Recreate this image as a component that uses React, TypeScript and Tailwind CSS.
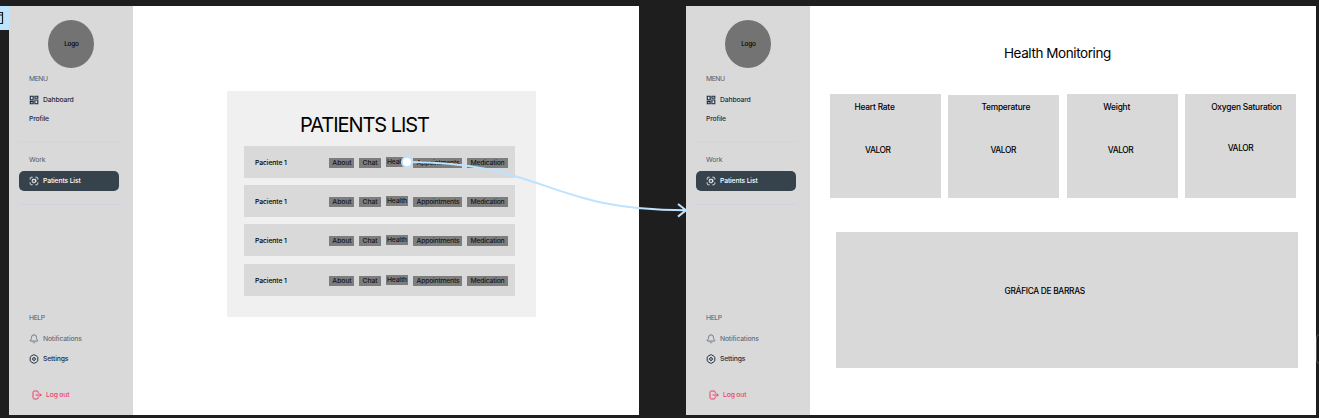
import React from "react";
import { Bell } from "lucide-react";

const actions = [
  { label: "About", box: "w-[25px]", text: "tracking-[-0.05px] pl-px" },
  { label: "Chat", box: "ml-[5px] w-[22px]", text: "tracking-[-0.05px]" },
  { label: "Health", box: "ml-[5px] w-[22px] -mt-px", text: "tracking-[-0.2px]" },
  { label: "Appointments", box: "ml-[5px] w-[49px]", text: "tracking-[-0.22px] pl-px" },
  { label: "Medication", box: "ml-[5px] w-[41px]", text: "tracking-[-0.22px]" },
];

const cards = [
  { title: "Heart Rate", box: "h-[104px]", titlePad: "pl-[24.5px]", valuePad: "pl-[35px] mt-[31px]" },
  { title: "Temperature", box: "mt-px h-[103px]", titlePad: "pl-[33px] -mt-px", valuePad: "pl-[42px] mt-[31px]" },
  { title: "Weight", box: "h-[104px]", titlePad: "pl-[36.5px]", valuePad: "pl-[41px] mt-[31px]" },
  { title: "Oxygen Saturation", box: "h-[104px]", titlePad: "pl-[26px]", valuePad: "pl-[42.5px] mt-[29px]" },
];

function DashboardIcon() {
  return (
    <svg viewBox="0 0 10 10" className="size-[10px]" fill="none" stroke="currentColor" strokeWidth="1.1">
      <path d="M1.3 1.3h2.9v3.6H1.3zM5.9 1.3h2.9v2H5.9zM5.9 5h2.9v3.8H5.9zM1.3 6.6h2.9v2.2H1.3z" />
    </svg>
  );
}

function ScanIcon() {
  return (
    <svg viewBox="0 0 10 10" className="size-[10px]" fill="none" stroke="currentColor" strokeWidth="0.9" strokeLinecap="round">
      <path d="M1.2 3.2V2.5c0-.8.5-1.3 1.3-1.3h.7M6.8 1.2h.7c.8 0 1.3.5 1.3 1.3v.7M8.8 6.8v.7c0 .8-.5 1.3-1.3 1.3h-.7M3.2 8.8h-.7c-.8 0-1.3-.5-1.3-1.3v-.7" />
      <circle cx="5" cy="5" r="1.9" />
      <path d="M3.3 3l.7.7M6.7 3l-.7.7M5 5v.1" />
    </svg>
  );
}

function SettingsIcon() {
  return (
    <svg viewBox="0 0 10 10" className="size-[10px]" fill="none" stroke="currentColor" strokeWidth="1" strokeLinejoin="round">
      <path d="M4.3.9a1.4 1.4 0 0 1 1.4 0l2.4 1.4c.4.2.7.7.7 1.2v3c0 .5-.3 1-.7 1.2L5.7 9.1a1.4 1.4 0 0 1-1.4 0L1.9 7.7a1.4 1.4 0 0 1-.7-1.2v-3c0-.5.3-1 .7-1.2z" />
      <circle cx="5" cy="5" r="1.4" />
    </svg>
  );
}

function LogoutIcon() {
  return (
    <svg viewBox="0 0 10 10" className="size-[10px]" fill="none" stroke="currentColor" strokeWidth="1" strokeLinecap="round" strokeLinejoin="round">
      <path d="M6.2 3V2.2C6.2 1.5 5.7 1 5 1H2.2C1.5 1 1 1.5 1 2.2v5.6C1 8.5 1.5 9 2.2 9H5c.7 0 1.2-.5 1.2-1.2V7M4 5h5M7.8 3.7L9.2 5 7.8 6.3" />
    </svg>
  );
}

function Sidebar() {
  return (
    <aside className="flex w-[124px] shrink-0 flex-col bg-[#d9d9d9] pt-[14px] text-[6.8px] font-medium tracking-[-0.15px] whitespace-nowrap text-[#1c2d42]">
      <div className="ml-[38.5px] flex h-12 w-[46px] items-center justify-center rounded-[50%] bg-[#737373] pl-0.5 text-[6.4px] leading-3 text-black">
        Logo
      </div>
      <div className="mt-[5px] ml-5 h-3 leading-3 font-normal tracking-[-0.45px] text-[#4d5b6c]">MENU</div>
      <div className="mt-[9px] ml-5 flex h-3 items-center gap-1 leading-3">
        <DashboardIcon />
        Dahboard
      </div>
      <div className="mt-[7px] ml-5 h-3 leading-3">Profile</div>
      <div className="mt-4 ml-[10px] h-px w-[100px] bg-[#d2d3e0]" />
      <div className="mt-3 ml-5 h-3 leading-3 font-normal text-[#4d5b6c]">Work</div>
      <div className="mt-[5px] ml-[10px] flex h-5 w-[100px] items-center gap-1 rounded-[5px] bg-[#36424c] pl-[10px] text-white">
        <ScanIcon />
        Patients List
      </div>
      <div className="mt-[13px] ml-[10px] h-px w-[100px] bg-[#d2d3e0]" />
      <div className="mt-[107px] ml-5 h-3 leading-3 font-normal tracking-[-0.4px] text-[#4d5b6c]">HELP</div>
      <div className="mt-[9px] ml-5 flex h-3 items-center gap-1 leading-3 tracking-[-0.2px] text-[#66717f]">
        <Bell className="size-[10px]" strokeWidth={2.2} />
        Notifications
      </div>
      <div className="mt-2 ml-5 flex h-3 items-center gap-1 leading-3">
        <SettingsIcon />
        Settings
      </div>
      <div className="mt-6 ml-[23px] flex h-3 items-center gap-1 leading-3 text-[#ec3d6c]">
        <LogoutIcon />
        Log out
      </div>
    </aside>
  );
}

function PatientRow() {
  return (
    <div className="flex h-8 items-start bg-[#d9d9d9] pt-3 pl-[11px] text-[6.8px] font-medium whitespace-nowrap text-black">
      <span className="w-[74px] leading-[10px] tracking-[-0.1px]">Paciente 1</span>
      {actions.map((a) => (
        <span key={a.label} className={`flex h-[10px] justify-center bg-[#7d7d7d] leading-[10px] text-[#171717] ${a.box} ${a.text}`}>
          {a.label}
        </span>
      ))}
    </div>
  );
}

export default function App() {
  return (
    <div className="relative flex h-[418px] w-[1319px] overflow-hidden bg-[#1e1e1e] pt-[6px] font-['Inter',sans-serif] text-black">
      <div className="h-6 w-[9px] shrink-0 overflow-hidden bg-[#bde3ff]">
        <svg viewBox="0 0 9 24" className="h-6 w-[9px]" fill="none" stroke="#1e1e1e" strokeWidth="1.2">
          <path d="M0 6.5h2.500v11H0M0 9h2.500" />
        </svg>
      </div>
      <section className="flex h-[408.5px] w-[630px] shrink-0 bg-white">
        <Sidebar />
        <div className="mt-[85px] ml-[94px] h-[226px] w-[309px] bg-[#f0f0f0] pt-[22px] pl-[17px]">
          <h1 className="pl-[56px] text-[20px] leading-6 tracking-[-1.05px] whitespace-nowrap">PATIENTS LIST</h1>
          <div className="mt-[9px] flex w-[271px] flex-col gap-[7.2px]">
            <PatientRow />
            <PatientRow />
            <PatientRow />
            <PatientRow />
          </div>
        </div>
      </section>
      <section className="ml-[47px] flex h-[408.5px] w-[630px] shrink-0 bg-white">
        <Sidebar />
        <div className="w-[506px] pt-[38px]">
          <h2 className="pl-[194px] text-[13.5px] leading-[18px] tracking-[-0.42px] whitespace-nowrap">Health Monitoring</h2>
          <div className="mt-8 ml-5 flex items-start gap-[7.4px] text-[8.4px] leading-3 font-medium whitespace-nowrap">
            {cards.map((c) => (
              <div key={c.title} className={`w-[111px] bg-[#d9d9d9] pt-[7px] ${c.box}`}>
                <div className={`tracking-[-0.22px] ${c.titlePad}`}>{c.title}</div>
                <div className={`tracking-[-0.4px] ${c.valuePad}`}>VALOR</div>
              </div>
            ))}
          </div>
          <div className="mt-[34px] ml-[25.5px] h-[136px] w-[462px] bg-[#d9d9d9] pt-[53px] pl-[169px] text-[8.4px] leading-3 font-medium tracking-[-0.33px] whitespace-nowrap">
            GRÁFICA DE BARRAS
          </div>
        </div>
      </section>
      <div className="mt-[328px] h-[30px] w-4 shrink-0 rounded-[4px] border border-[#555555] bg-[#161616]" />
      <svg className="pointer-events-none absolute top-0 left-0 h-[418px] w-[1319px]" viewBox="0 0 1319 418" fill="none" stroke="#bde3ff" strokeWidth="2">
        <path d="M407 162C546 162 546 210.300 685 210.300M678 204l8 6.300-8 6.300" />
        <circle cx="407" cy="162" r="5" fill="white" />
      </svg>
    </div>
  );
}
